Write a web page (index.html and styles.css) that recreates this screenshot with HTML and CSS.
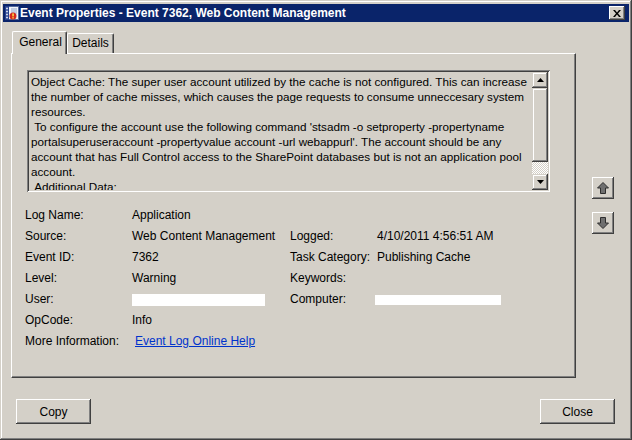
FILE: index.html
```html
<!DOCTYPE html>
<html lang="en">
<head>
  <meta charset="UTF-8">
  <title>Event Properties - Event 7362, Web Content Management</title>
  <link rel="stylesheet" href="styles.css">
</head>
<body>

<div class="window">
  <!-- Title bar -->
  <div class="titlebar">
    <svg class="title-icon" width="16" height="16" viewBox="0 0 16 16">
      <rect x="4.5" y="1.5" width="10" height="13" fill="#eef2f8" stroke="#51679a"/>
      <rect x="1" y="1" width="4" height="14" fill="#27418f"/>
      <circle cx="3" cy="3.5" r="1" fill="#dfe6f5"/>
      <circle cx="3" cy="6.5" r="1" fill="#dfe6f5"/>
      <circle cx="3" cy="9.5" r="1" fill="#dfe6f5"/>
      <circle cx="3" cy="12.5" r="1" fill="#dfe6f5"/>
      <path d="M7 4h6M7 6h6M7 8h6" stroke="#8fa3c9"/>
      <circle cx="9" cy="11" r="3.5" fill="#d42a1e"/>
      <rect x="8.3" y="8.4" width="1.5" height="3" fill="#ffe14a"/>
      <rect x="8.3" y="12.2" width="1.5" height="1.3" fill="#ffe14a"/>
    </svg>
    <span class="title-text">Event Properties - Event 7362, Web Content Management</span>
    <button class="title-close">
      <svg width="8" height="7" viewBox="0 0 8 7">
        <path d="M0 0h2l2 2.5 2-2.5h2L5 3.5 8 7H6L4 4.5 2 7H0l3-3.5z" fill="#000"/>
      </svg>
    </button>
  </div>

  <div class="client">
    <div class="main">
      <div class="tabbox">
        <div class="tabs">
          <div class="tab active">General</div>
          <div class="tab">Details</div>
        </div>
        <div class="panel">
          <!-- Event description (read-only text box) -->
          <div class="textbox">
            <div class="textbox-text">
              <div>Object Cache: The super user account utilized by the cache is not configured. This can increase</div>
              <div>the number of cache misses, which causes the page requests to consume unneccesary system</div>
              <div>resources.</div>
              <div>&nbsp;To configure the account use the following command 'stsadm -o setproperty -propertyname</div>
              <div>portalsuperuseraccount -propertyvalue account -url webappurl'. The account should be any</div>
              <div>account that has Full Control access to the SharePoint databases but is not an application pool</div>
              <div>account.</div>
              <div>&nbsp;Additional Data:</div>
            </div>
            <div class="scrollbar">
              <div class="sb-btn">
                <svg width="7" height="4" viewBox="0 0 7 4"><path d="M3.5 0L7 4H0z" fill="#000"/></svg>
              </div>
              <div class="sb-thumb"></div>
              <div class="sb-track"></div>
              <div class="sb-btn">
                <svg width="7" height="4" viewBox="0 0 7 4"><path d="M0 0h7L3.5 4z" fill="#000"/></svg>
              </div>
            </div>
          </div>

          <!-- Event fields -->
          <div class="props">
            <div>Log Name:</div><div>Application</div><div></div><div></div>
            <div>Source:</div><div>Web Content Management</div><div>Logged:</div><div>4/10/2011 4:56:51 AM</div>
            <div>Event ID:</div><div>7362</div><div>Task Category:</div><div>Publishing Cache</div>
            <div>Level:</div><div>Warning</div><div>Keywords:</div><div></div>
            <div>User:</div><div><span class="redact redact-user"></span></div><div>Computer:</div><div><span class="redact redact-computer"></span></div>
            <div>OpCode:</div><div>Info</div><div></div><div></div>
            <div>More Information:</div><div><a class="help-link" href="#">Event Log Online Help</a></div><div></div><div></div>
          </div>
        </div>
      </div>

      <!-- Previous / next event -->
      <div class="side">
        <button class="nav-btn">
          <svg width="12" height="12" viewBox="0 0 12 12"><path d="M6 0.5L11.5 6H8.5V11.5H3.5V6H0.5Z" fill="#6f6f6f" stroke="#2e2e2e"/></svg>
        </button>
        <button class="nav-btn">
          <svg width="12" height="12" viewBox="0 0 12 12"><path d="M6 11.5L11.5 6H8.5V0.5H3.5V6H0.5Z" fill="#6f6f6f" stroke="#2e2e2e"/></svg>
        </button>
      </div>
    </div>

    <div class="footer">
      <button class="btn">Copy</button>
      <button class="btn">Close</button>
    </div>
  </div>
</div>

</body>
</html>
```

FILE: styles.css
```css
body {
  margin: 0;
  background-color: #d4d0c8;
  font-family: 'Liberation Sans', Arial, sans-serif;
  font-size: 12px;
  color: #000;
}

/* Outer dialog frame */
.window {
  width: 632px;
  height: 440px;
  box-sizing: border-box;
  padding: 4px 3px 3px 3px;
  background-color: #d4d0c8;
  box-shadow: inset -1px -1px #404040, inset 1px 1px #d4d0c8,
              inset -2px -2px #808080, inset 2px 2px #fff;
  display: flex;
  flex-direction: column;
}

.titlebar {
  height: 18px;
  flex-shrink: 0;
  background-color: #0a246a;
  display: flex;
  align-items: center;
  padding-left: 1px;
  color: white;
  font-weight: bold;
}

.title-icon {
  flex-shrink: 0;
}

.title-text {
  white-space: nowrap;
}

.title-close {
  margin-left: auto;
  margin-right: 4px;
  width: 16px;
  height: 14px;
  padding: 0;
  border: none;
  background-color: #d4d0c8;
  box-shadow: inset -1px -1px #404040, inset 1px 1px #fff,
              inset -2px -2px #808080;
  display: flex;
  align-items: center;
  justify-content: center;
}

.client {
  flex: 1;
  display: flex;
  flex-direction: column;
  padding: 9px 14px 0 8px;
}

.main {
  display: flex;
}

.tabbox {
  width: 565px;
}

/* Tab strip */
.tabs {
  display: flex;
  align-items: flex-end;
  height: 22px;
  padding-left: 1px;
}

.tab {
  box-sizing: border-box;
  height: 20px;
  width: 47px;
  padding-top: 2px;
  line-height: 15px;
  text-align: center;
  border-top: 1px solid #fff;
  border-left: 1px solid #fff;
  border-right: 1px solid #404040;
  border-radius: 2px 2px 0 0;
  box-shadow: inset -1px 0 #808080;
  background-color: #d4d0c8;
}

.tab.active {
  height: 23px;
  width: 55px;
  margin-bottom: -1px;
  padding-top: 3px;
  padding-left: 2px;
  position: relative;
  z-index: 1;
}

.panel {
  height: 325px;
  box-sizing: border-box;
  border: 1px solid;
  border-color: #fff #404040 #404040 #fff;
  box-shadow: inset -1px -1px #808080;
  padding: 16px 0 0 15px;
}

/* Read-only description box */
.textbox {
  width: 523px;
  height: 122px;
  box-sizing: border-box;
  padding: 2px;
  display: flex;
  box-shadow: inset 1px 1px #808080, inset -1px -1px #fff,
              inset 2px 2px #404040, inset -2px -2px #d4d0c8;
}

.textbox-text {
  flex: 1;
  min-width: 0;
  height: 118px;
  overflow: hidden;
  white-space: nowrap;
  line-height: 15px;
  padding: 2px 0 0 2px;
  box-sizing: border-box;
  font-size: 11.7px;
}

.scrollbar {
  width: 16px;
  flex-shrink: 0;
  display: flex;
  flex-direction: column;
}

.sb-btn, .sb-thumb {
  background-color: #d4d0c8;
  box-shadow: inset -1px -1px #404040, inset 1px 1px #d4d0c8,
              inset -2px -2px #808080, inset 2px 2px #fff;
}

.sb-btn {
  height: 16px;
  display: flex;
  align-items: center;
  justify-content: center;
}

.sb-thumb {
  height: 74px;
}

.sb-track {
  flex: 1;
  background: repeating-conic-gradient(#fff 0 25%, #d4d0c8 0 50%) 0 0 / 2px 2px;
}

/* Field grid below the description */
.props {
  margin-top: 13px;
  margin-left: -2px;
  display: grid;
  grid-template-columns: 107px 158px 87px 1fr;
  grid-auto-rows: 21px;
  align-items: center;
  line-height: 15px;
}

.redact {
  display: block;
  background-color: #fff;
}

.redact-user {
  width: 133px;
  height: 12px;
}

.redact-computer {
  width: 126px;
  height: 10px;
  margin-left: -2px;
}

.help-link {
  margin-left: 3px;
  color: #0033cc;
}

.side {
  margin-left: 16px;
  padding-top: 146px;
  display: flex;
  flex-direction: column;
  gap: 13px;
}

.nav-btn {
  width: 22px;
  height: 22px;
  padding: 0;
  border: none;
  background-color: #d4d0c8;
  box-shadow: inset -1px -1px #404040, inset 1px 1px #fff,
              inset -2px -2px #808080;
  display: flex;
  align-items: center;
  justify-content: center;
}

.footer {
  margin-top: 21px;
  margin-left: 5px;
  display: flex;
  justify-content: space-between;
}

.btn {
  width: 75px;
  height: 25px;
  padding: 0;
  border: none;
  background-color: #d4d0c8;
  font-family: 'Liberation Sans', Arial, sans-serif;
  font-size: 12px;
  color: #000;
  box-shadow: inset -1px -1px #404040, inset 1px 1px #fff,
              inset -2px -2px #808080;
}
```
